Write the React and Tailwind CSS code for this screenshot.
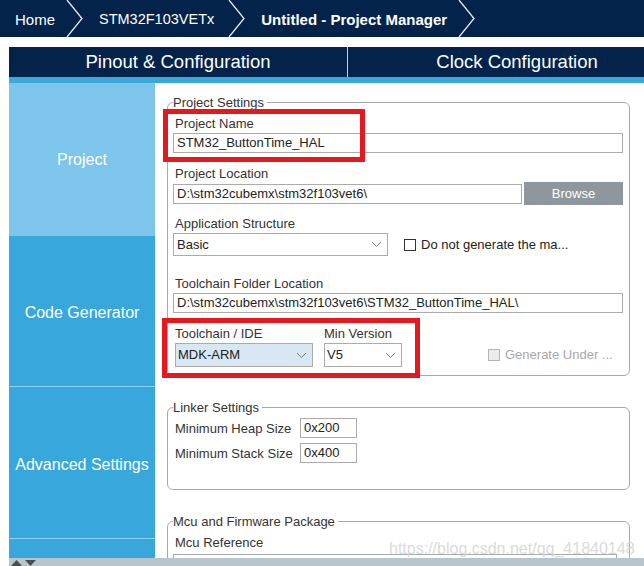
import React from "react";

const Chevron = () => (
  <svg width="17" height="37" viewBox="0 0 17 37" className="shrink-0 block">
    <polyline points="1,0 16,18.5 1,37" fill="none" stroke="#e6ebf2" strokeWidth="1.3" />
  </svg>
);

const Caret = () => (
  <svg width="11" height="7" viewBox="0 0 11 7" className="shrink-0">
    <polyline points="1,1 5.5,5.5 10,1" fill="none" stroke="#7a7a7a" strokeWidth="1" />
  </svg>
);

const Label = ({ children, className = "" }) => (
  <div className={"h-[15px] text-[13px] leading-[15px] text-[#333] whitespace-nowrap " + className}>{children}</div>
);

const Field = ({ children, className = "" }) => (
  <div className={"h-[20px] border border-[#ababab] bg-white px-[3px] text-[13px] leading-[18px] text-[#222] whitespace-nowrap overflow-hidden " + className}>
    {children}
  </div>
);

export default function App() {
  return (
    <div className="relative w-[644px] h-[566px] overflow-hidden bg-white flex flex-col font-['Liberation_Sans',Arial,sans-serif]">
      {/* breadcrumb */}
      <div className="h-[37px] shrink-0 bg-[#03234b] flex items-center text-white text-[15px] whitespace-nowrap">
        <span className="ml-[15px] pt-[3px]">Home</span>
        <span className="ml-[11px]"><Chevron /></span>
        <span className="ml-[16px] pt-[3px] text-[14.5px]">STM32F103VETx</span>
        <span className="ml-[14px]"><Chevron /></span>
        <span className="ml-[16px] pt-[3px] font-bold">Untitled - Project Manager</span>
        <span className="ml-[11px]"><Chevron /></span>
      </div>
      <div className="h-[10px] shrink-0" />

      <div className="ml-[9px] flex-1 min-h-0 flex flex-col">
        {/* tabs */}
        <div className="h-[30px] shrink-0 bg-[#03234b] flex overflow-hidden text-white text-[18.5px] whitespace-nowrap">
          <div className="w-[339px] shrink-0 border-r border-[#c9ced6] flex items-center justify-center">Pinout &amp; Configuration</div>
          <div className="w-[338px] shrink-0 flex items-center justify-center">Clock Configuration</div>
        </div>
        <div className="h-[6px] shrink-0 bg-[#3aa8db]" />

        {/* body */}
        <div className="flex-1 min-h-0 flex overflow-hidden">
          {/* sidebar */}
          <div className="w-[146px] shrink-0 flex flex-col text-white text-[16px] whitespace-nowrap">
            <div className="h-[153px] shrink-0 bg-[#7dc5ea] flex items-center justify-center">Project</div>
            <div className="h-[150px] shrink-0 bg-[#38a7db] flex items-center justify-center pt-[4px]">Code Generator</div>
            <div className="h-px shrink-0 bg-[#93d2ef]" />
            <div className="h-[151px] shrink-0 bg-[#38a7db] flex items-center justify-center pt-[5px]">Advanced Settings</div>
            <div className="h-px shrink-0 bg-[#93d2ef]" />
            <div className="flex-1 bg-[#38a7db]" />
          </div>

          {/* content */}
          <div className="flex-1 min-w-0 pl-[12px] pt-[12px]">
            {/* Project Settings */}
            <fieldset className="w-[463px] border border-[#a9a9a9] rounded-[6px] px-[5px] pb-[8px]">
              <legend className="text-[13px] leading-[15px] text-[#333] pr-[3px]">Project Settings</legend>
              <div className="pt-[6px] pr-[1px]">
                <div className="h-[50px]">
                  <Label className="mb-[2px] ml-[2px]">Project Name</Label>
                  <Field>STM32_ButtonTime_HAL</Field>
                </div>
                <div className="h-[50px]">
                  <Label className="mb-[1px] ml-[2px]">Project Location</Label>
                  <div className="h-[23px] flex items-center gap-[2px]">
                    <Field className="flex-1">D:\stm32cubemx\stm32f103vet6\</Field>
                    <div className="w-[99px] h-[23px] bg-[#8e979d] text-white text-[13px] flex items-center justify-center">Browse</div>
                  </div>
                </div>
                <div className="h-[60px]">
                  <Label className="mb-[2px] ml-[2px]">Application Structure</Label>
                  <div className="flex items-center">
                    <div className="w-[215px] h-[23px] border border-[#ababab] bg-white flex items-center justify-between pl-[3px] pr-[5px] text-[13px] text-[#222]">
                      <span>Basic</span>
                      <Caret />
                    </div>
                    <div className="ml-[16px] w-[12px] h-[12px] border border-[#333] bg-white" />
                    <span className="ml-[5px] text-[13px] text-[#222] whitespace-nowrap">Do not generate the ma...</span>
                  </div>
                </div>
                <div className="h-[50px]">
                  <Label className="mb-[2px] ml-[2px]">Toolchain Folder Location</Label>
                  <Field>D:\stm32cubemx\stm32f103vet6\STM32_ButtonTime_HAL\</Field>
                </div>
                <div className="flex items-end ml-[2px]">
                  <div className="w-[138px]">
                    <Label className="mb-[2px]">Toolchain / IDE</Label>
                    <div className="h-[24px] border border-[#ababab] bg-[#d8e7f4] flex items-center justify-between pl-[2px] pr-[5px] text-[13px] text-[#222]">
                      <span>MDK-ARM</span>
                      <Caret />
                    </div>
                  </div>
                  <div className="w-[78px] ml-[11px]">
                    <Label className="mb-[2px]">Min Version</Label>
                    <div className="h-[24px] border border-[#ababab] bg-white flex items-center justify-between pl-[2px] pr-[5px] text-[13px] text-[#222]">
                      <span>V5</span>
                      <Caret />
                    </div>
                  </div>
                  <div className="h-[24px] flex items-center ml-[86px]">
                    <div className="w-[12px] h-[12px] border border-[#b5b5b5] bg-[#ececec]" />
                    <span className="ml-[5px] text-[13px] text-[#a8a8a8] whitespace-nowrap">Generate Under ...</span>
                  </div>
                </div>
              </div>
            </fieldset>

            {/* Linker Settings */}
            <fieldset className="mt-[24px] w-[463px] border border-[#a9a9a9] rounded-[6px] px-[5px] pb-[26px]">
              <legend className="text-[13px] leading-[15px] text-[#333] pr-[3px]">Linker Settings</legend>
              <div className="pt-[3px] pl-[2px] flex flex-col gap-[5px]">
                <div className="flex items-center h-[20px]">
                  <Label className="w-[125px]">Minimum Heap Size</Label>
                  <Field className="w-[57px]">0x200</Field>
                </div>
                <div className="flex items-center h-[20px]">
                  <Label className="w-[125px]">Minimum Stack Size</Label>
                  <Field className="w-[57px]">0x400</Field>
                </div>
              </div>
            </fieldset>

            {/* Mcu and Firmware Package */}
            <fieldset className="mt-[24px] w-[463px] border border-[#a9a9a9] rounded-[6px] px-[5px] pb-[40px]">
              <legend className="text-[13px] leading-[15px] text-[#333] pr-[3px]">Mcu and Firmware Package</legend>
              <div className="pt-[6px] pr-[7px]">
                <Label className="mb-[4px] ml-[2px]">Mcu Reference</Label>
                <Field> </Field>
              </div>
            </fieldset>
          </div>
        </div>

        {/* bottom bar */}
        <div className="h-[8px] shrink-0 bg-[#b8c5cc] flex items-end gap-[3px] pl-[2px]">
          <svg width="11" height="6" viewBox="0 0 11 6"><polygon points="0,6 5.5,0 11,6" fill="#4d4d4d" /></svg>
          <svg width="11" height="6" viewBox="0 0 11 6"><polygon points="0,0 11,0 5.5,6" fill="#4d4d4d" /></svg>
        </div>
      </div>

      {/* annotation boxes */}
      <div className="absolute left-[163px] top-[109px] w-[202px] h-[53px] border-[5px] border-[#e3191f]" />
      <div className="absolute left-[162px] top-[318px] w-[258px] h-[60px] border-[5px] border-[#e3191f]" />

      {/* watermark */}
      <div className="absolute left-[389px] top-[539px] text-[16px] leading-[19px] text-[#cfd3d6] opacity-80 whitespace-nowrap">https://blog.csdn.net/qq_41840148</div>
    </div>
  );
}
